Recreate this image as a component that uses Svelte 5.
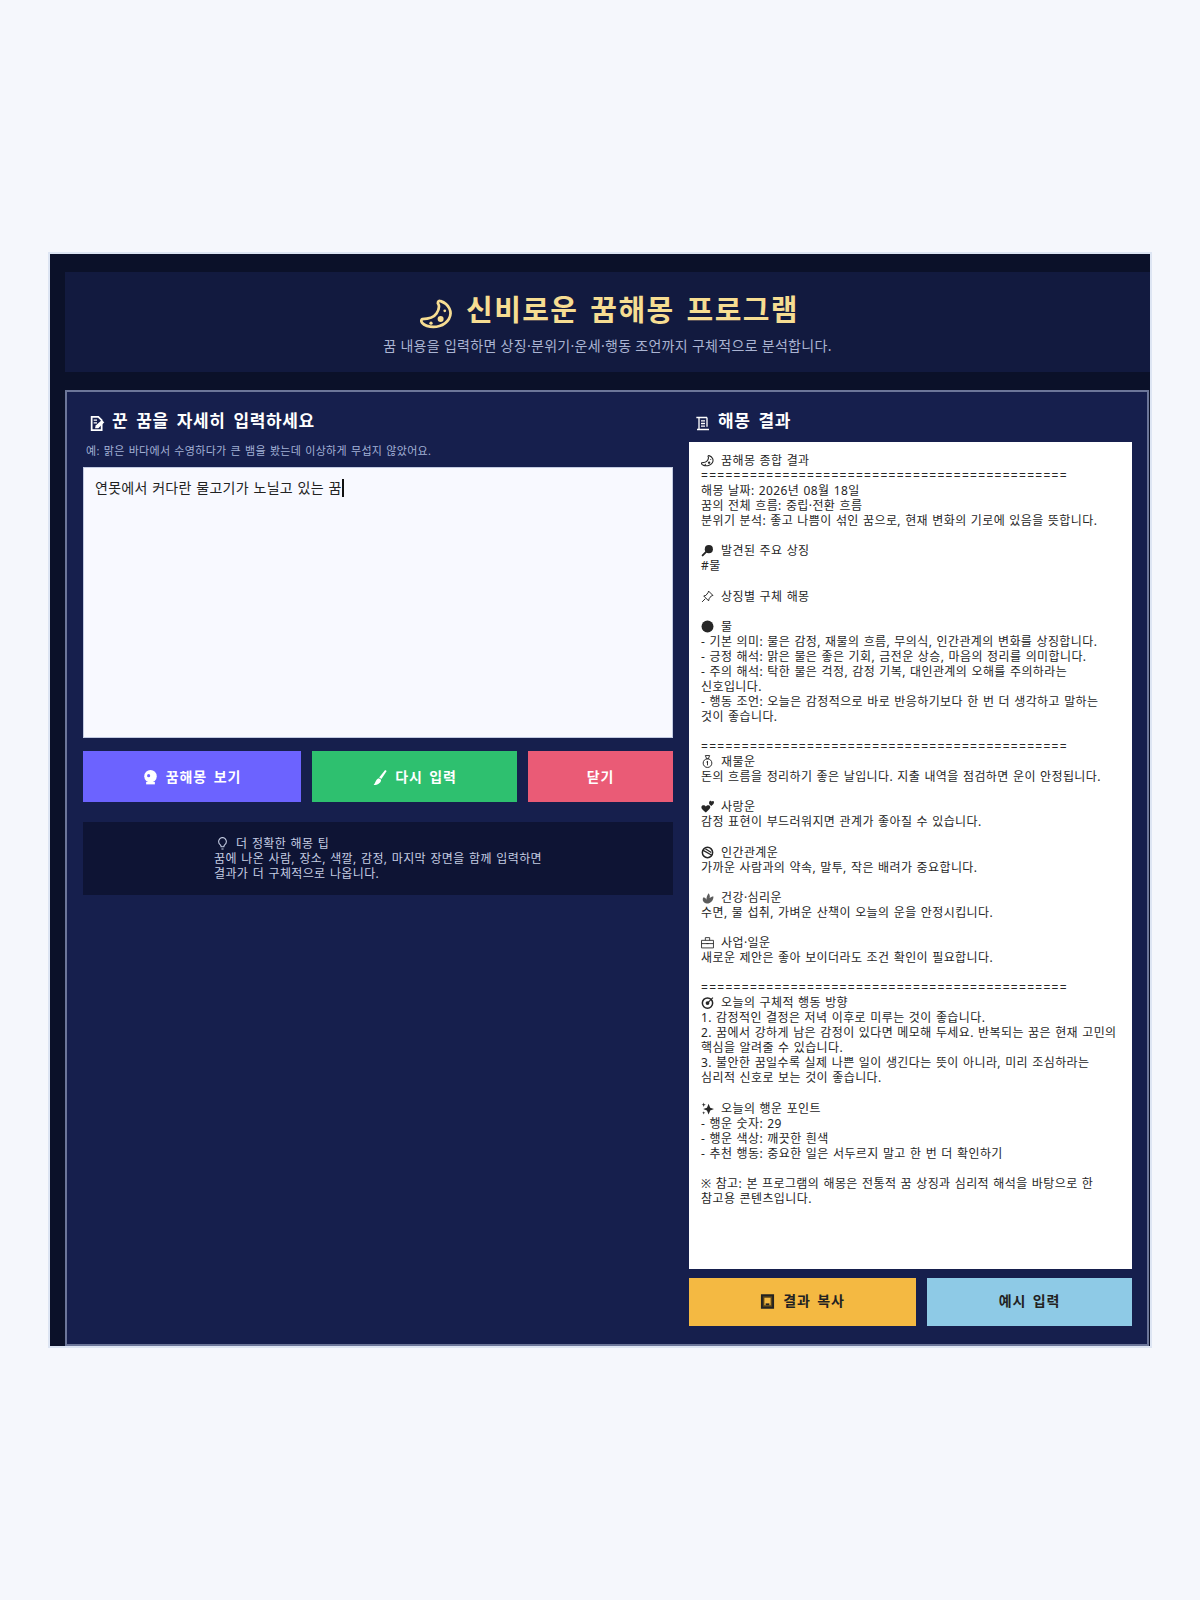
<script lang="ts">
  type Line = { text?: string; icon?: string; rule?: boolean };

  const rule: Line = { rule: true };
  const blank: Line = {};

  const resultLines: Line[] = [
    { icon: 'moon', text: '꿈해몽 종합 결과' },
    rule,
    { text: '해몽 날짜: 2026년 08월 18일' },
    { text: '꿈의 전체 흐름: 중립·전환 흐름' },
    { text: '분위기 분석: 좋고 나쁨이 섞인 꿈으로, 현재 변화의 기로에 있음을 뜻합니다.' },
    blank,
    { icon: 'search', text: '발견된 주요 상징' },
    { text: '#물' },
    blank,
    { icon: 'pin', text: '상징별 구체 해몽' },
    blank,
    { icon: 'dot', text: '물' },
    { text: '- 기본 의미: 물은 감정, 재물의 흐름, 무의식, 인간관계의 변화를 상징합니다.' },
    { text: '- 긍정 해석: 맑은 물은 좋은 기회, 금전운 상승, 마음의 정리를 의미합니다.' },
    { text: '- 주의 해석: 탁한 물은 걱정, 감정 기복, 대인관계의 오해를 주의하라는 신호입니다.' },
    { text: '- 행동 조언: 오늘은 감정적으로 바로 반응하기보다 한 번 더 생각하고 말하는 것이 좋습니다.' },
    blank,
    rule,
    { icon: 'bag', text: '재물운' },
    { text: '돈의 흐름을 정리하기 좋은 날입니다. 지출 내역을 점검하면 운이 안정됩니다.' },
    blank,
    { icon: 'hearts', text: '사랑운' },
    { text: '감정 표현이 부드러워지면 관계가 좋아질 수 있습니다.' },
    blank,
    { icon: 'shake', text: '인간관계운' },
    { text: '가까운 사람과의 약속, 말투, 작은 배려가 중요합니다.' },
    blank,
    { icon: 'herb', text: '건강·심리운' },
    { text: '수면, 물 섭취, 가벼운 산책이 오늘의 운을 안정시킵니다.' },
    blank,
    { icon: 'case', text: '사업·일운' },
    { text: '새로운 제안은 좋아 보이더라도 조건 확인이 필요합니다.' },
    blank,
    rule,
    { icon: 'target', text: '오늘의 구체적 행동 방향' },
    { text: '1. 감정적인 결정은 저녁 이후로 미루는 것이 좋습니다.' },
    { text: '2. 꿈에서 강하게 남은 감정이 있다면 메모해 두세요. 반복되는 꿈은 현재 고민의 핵심을 알려줄 수 있습니다.' },
    { text: '3. 불안한 꿈일수록 실제 나쁜 일이 생긴다는 뜻이 아니라, 미리 조심하라는 심리적 신호로 보는 것이 좋습니다.' },
    blank,
    { icon: 'spark', text: '오늘의 행운 포인트' },
    { text: '- 행운 숫자: 29' },
    { text: '- 행운 색상: 깨끗한 흰색' },
    { text: '- 추천 행동: 중요한 일은 서두르지 말고 한 번 더 확인하기' },
    blank,
    { text: '※ 참고: 본 프로그램의 해몽은 전통적 꿈 상징과 심리적 해석을 바탕으로 한 참고용 콘텐츠입니다.' },
  ];
</script>

{#snippet icon(name: string)}
  <svg class="icon" viewBox="0 0 24 24" aria-hidden="true">
    {#if name === 'moon'}
      <path d="M15 3C21 5 24 11 21 16 18 21 11 23 5 21 2 20 0 18 1.500 16 6 16 10 15 12 12 14 9 14 6 13 4.500 13 3 14 2.500 15 3z" fill="none" stroke="currentColor" stroke-width="2" stroke-linejoin="round" />
      <circle cx="15" cy="16" r="2.200" fill="currentColor" /><circle cx="8" cy="19" r="1.200" fill="currentColor" /><circle cx="18" cy="10" r="1" fill="currentColor" />
    {:else if name === 'memo'}
      <path d="M4 2h10l5 5v15H4z" fill="none" stroke="currentColor" stroke-width="2.600" />
      <path d="M9 19l1-4 9-8 4 3-9 9z" fill="currentColor" />
      <path d="M7 7h5M7 11h5" stroke="currentColor" stroke-width="1.800" />
    {:else if name === 'scroll'}
      <path d="M2 3h16M6 3v18h15M6 21H3M18 3v14M9 8h6M9 12h6M9 16h6" fill="none" stroke="currentColor" stroke-width="2" />
    {:else if name === 'search'}
      <circle cx="14.500" cy="9.500" r="7.500" fill="currentColor" />
      <path d="M9 15l-6 6" stroke="currentColor" stroke-width="3.500" stroke-linecap="round" />
    {:else if name === 'pin'}
      <path d="M14 2l8 8-3 1-4 5-1 4-9-9 4-1 4-5zM8 16l-6 6" fill="none" stroke="currentColor" stroke-width="1.800" stroke-linejoin="round" />
    {:else if name === 'dot'}
      <circle cx="12" cy="12" r="11" fill="currentColor" />
    {:else if name === 'bag'}
      <circle cx="12" cy="15" r="8" fill="none" stroke="currentColor" stroke-width="1.800" />
      <path d="M8 1h8l-2.500 6h-3zM12 11v8M10 13h3" fill="none" stroke="currentColor" stroke-width="1.700" />
    {:else if name === 'hearts'}
      <path d="M9 23C2 18 0 15 1 12c1-3 6-3 8 0 2-3 7-3 8 0 1 3-2 6-8 11z" fill="currentColor" />
      <path d="M19 11c-3-3-5-4-4-7s4-3 5-1c1-2 4-1 4 1 0 3-2 4-5 7z" fill="currentColor" />
    {:else if name === 'shake'}
      <circle cx="12" cy="12" r="9.500" fill="none" stroke="currentColor" stroke-width="2.800" />
      <path d="M4 8l16 9M8 5l11 7" stroke="currentColor" stroke-width="2.400" />
    {:else if name === 'herb'}
      <path d="M11 23c-7-1-9-6-7-11 3 0 5 1 6 4 0-4 1-8 4-12 2 2 3 6 2 9 2-2 4-3 7-3 0 7-5 13-12 13z" fill="currentColor" opacity=".75" />
    {:else if name === 'case'}
      <path d="M1 8h22v14H1zM8 8V3h8v5M1 14h22M10 14h4" fill="none" stroke="currentColor" stroke-width="1.600" />
    {:else if name === 'target'}
      <circle cx="12" cy="13" r="9.500" fill="none" stroke="currentColor" stroke-width="2.800" />
      <circle cx="12" cy="13" r="3.500" fill="currentColor" />
      <path d="M12 13l10-10" stroke="currentColor" stroke-width="2" />
    {:else if name === 'spark'}
      <path d="M14 3l3 7.500L24 13l-7 2.500L14 23l-3-7.500L4 13l7-2.500z" fill="currentColor" />
      <path d="M5 1l1 3 3 1-3 1-1 3-1-3-3-1 3-1zM5 17l.8 2.200L8 20l-2.200.8L5 23l-.8-2.200L2 20l2.200-.8z" fill="currentColor" />
    {:else if name === 'ball'}
      <circle cx="12" cy="10" r="10" fill="currentColor" />
      <path d="M5 19h14v4H5z" fill="currentColor" />
      <circle cx="9" cy="9" r="2.500" fill="#6c63ff" />
    {:else if name === 'brush'}
      <path d="M21 0l2.500 1.500-8.500 13-3.500-2.500z" fill="currentColor" />
      <path d="M11 13l3.500 2.500c0 5-5 8.500-12 8.500 3-3 3-9 8.500-11z" fill="currentColor" />
    {:else if name === 'bulb'}
      <path d="M12 1a7.500 7.500 0 0 0-4 13.500c1 1 1.500 2 1.500 3.500h5c0-1.500.5-2.500 1.500-3.500A7.500 7.500 0 0 0 12 1zM10 22h4" fill="none" stroke="currentColor" stroke-width="2" />
    {:else if name === 'clip'}
      <path d="M3 2h18v20H3z" fill="#5b4517" stroke="currentColor" stroke-width="3" />
      <path d="M7 6h10v12H7z" fill="#f4b942" />
      <path d="M9 18h6v-3H9z" fill="currentColor" />
    {/if}
  </svg>
{/snippet}

<div class="page">
  <div class="window">
    <header class="hero">
      <h1><span class="moon">{@render icon('moon')}</span>신비로운 꿈해몽 프로그램</h1>
      <p>꿈 내용을 입력하면 상징·분위기·운세·행동 조언까지 구체적으로 분석합니다.</p>
    </header>

    <main class="panel">
      <section class="left">
        <h2>{@render icon('memo')}꾼 꿈을 자세히 입력하세요</h2>
        <p class="hint">예: 맑은 바다에서 수영하다가 큰 뱀을 봤는데 이상하게 무섭지 않았어요.</p>
        <div class="dream" role="textbox" aria-label="꿈 내용">연못에서 커다란 물고기가 노닐고 있는 꿈<span class="caret"></span></div>

        <div class="actions">
          <button class="purple">{@render icon('ball')}꿈해몽 보기</button>
          <button class="green">{@render icon('brush')}다시 입력</button>
          <button class="red">닫기</button>
        </div>

        <div class="tip">
          <div>
            <p>{@render icon('bulb')}더 정확한 해몽 팁</p>
            <p>꿈에 나온 사람, 장소, 색깔, 감정, 마지막 장면을 함께 입력하면</p>
            <p>결과가 더 구체적으로 나옵니다.</p>
          </div>
        </div>
      </section>

      <section class="right">
        <h2>{@render icon('scroll')}해몽 결과</h2>
        <div class="result">
          {#each resultLines as line}
            {#if line.rule}
              <div class="line rule">=============================================</div>
            {:else}
              <div class="line">{#if line.icon}{@render icon(line.icon)}{/if}{line.text ?? ''}</div>
            {/if}
          {/each}
        </div>
        <div class="result-actions">
          <button class="amber">{@render icon('clip')}결과 복사</button>
          <button class="sky">예시 입력</button>
        </div>
      </section>
    </main>
  </div>
</div>

<style>
  :global(body) {
    margin: 0;
    background: #f5f7fc;
  }
  .page {
    min-height: 1600px;
    display: flex;
    align-items: center;
    justify-content: center;
    font-family: 'Noto Sans', 'Noto Sans CJK KR', sans-serif;
  }
  .window {
    box-sizing: border-box;
    width: 1104px;
    height: 1096px;
    border: 2px solid #dde5f3;
    background: #0b1129;
    padding: 18px 0 0 15px;
  }
  .hero {
    height: 100px;
    box-sizing: border-box;
    background: #121a3f;
    text-align: center;
    padding-top: 18px;
  }
  .hero h1 {
    margin: 0;
    padding-left: 4px;
    font-size: 29px;
    line-height: 40px;
    font-weight: 700;
    color: #f6dd92;
    letter-spacing: 1.4px;
    word-spacing: 3px;
  }
  .moon .icon {
    width: 33px;
    height: 33px;
    margin: 0 13px 0 0;
    vertical-align: -9px;
  }
  .hero p {
    margin: 6px 0 0;
    font-size: 14px;
    line-height: 20px;
    color: #aab4d2;
    letter-spacing: 0.3px;
  }
  .panel {
    box-sizing: border-box;
    width: 1084px;
    height: 956px;
    margin-top: 18px;
    border: 2px solid #6c7699;
    background: #161f4d;
    padding: 0 15px 0 16px;
    display: grid;
    grid-template-columns: 590px 443px;
    column-gap: 16px;
  }
  h2 {
    margin: 0;
    height: 50px;
    padding-top: 16px;
    box-sizing: border-box;
    font-size: 17px;
    line-height: 26px;
    font-weight: 700;
    color: #fff;
    letter-spacing: 0.6px;
    word-spacing: 3px;
  }
  h2 .icon {
    width: 16px;
    height: 17px;
    margin: 0 7px 0 6px;
    vertical-align: -5px;
  }
  .hint {
    box-sizing: border-box;
    margin: 0;
    height: 25px;
    padding: 1px 0 0 3px;
    font-size: 11px;
    line-height: 16px;
    color: #a3b1d6;
    letter-spacing: 0.3px;
    word-spacing: 0.9px;
  }
  .dream {
    box-sizing: border-box;
    height: 271px;
    background: #f8f9ff;
    border: 1px solid #c3cbe2;
    padding: 9px 11px;
    font-size: 14px;
    line-height: 21px;
    color: #222;
    letter-spacing: 0.25px;
    word-spacing: 0.8px;
  }
  .caret {
    display: inline-block;
    width: 2px;
    height: 18px;
    background: #111;
    vertical-align: -4px;
  }
  button {
    border: 0;
    padding: 0 0 2px;
    font-family: inherit;
    font-size: 14px;
    font-weight: 700;
    cursor: pointer;
    letter-spacing: 0.9px;
    word-spacing: 2px;
  }
  button .icon {
    width: 15px;
    height: 15px;
    margin-right: 8px;
    vertical-align: -3px;
  }
  .actions {
    display: grid;
    grid-template-columns: 218px 205px 145px;
    gap: 11px;
    height: 51px;
    margin-top: 13px;
  }
  .purple { background: #6c63ff; color: #fff; }
  .green { background: #2ec06f; color: #fff; }
  .red { background: #ea5b76; color: #fff; }
  .tip {
    height: 73px;
    margin-top: 20px;
    background: #0e1434;
    display: flex;
    justify-content: center;
    align-items: center;
    color: #c5cde3;
    font-size: 12px;
    line-height: 15px;
    letter-spacing: 0.35px;
    word-spacing: 1px;
  }
  .tip p {
    margin: 0;
  }
  .tip .icon {
    width: 13px;
    height: 13px;
    margin: 0 7px 0 2px;
    vertical-align: -2px;
  }
  .result {
    box-sizing: border-box;
    height: 827px;
    background: #fff;
    padding: 11px 11px 10px 12px;
    font-size: 12px;
    line-height: 15.06px;
    color: #262626;
    letter-spacing: 0.4px;
    word-spacing: 0.7px;
    word-break: keep-all;
  }
  .line {
    min-height: 15.06px;
  }
  .rule {
    letter-spacing: 1.29px;
    white-space: nowrap;
    overflow: hidden;
  }
  .line .icon {
    width: 13px;
    height: 13px;
    margin-right: 7px;
    vertical-align: -2px;
  }
  .result-actions {
    display: grid;
    grid-template-columns: 227px 205px;
    gap: 11px;
    height: 48px;
    margin-top: 9px;
  }
  .result-actions button {
    padding-bottom: 4px;
  }
  .amber { background: #f4b942; color: #222; }
  .sky { background: #8ecae6; color: #222; }
</style>
